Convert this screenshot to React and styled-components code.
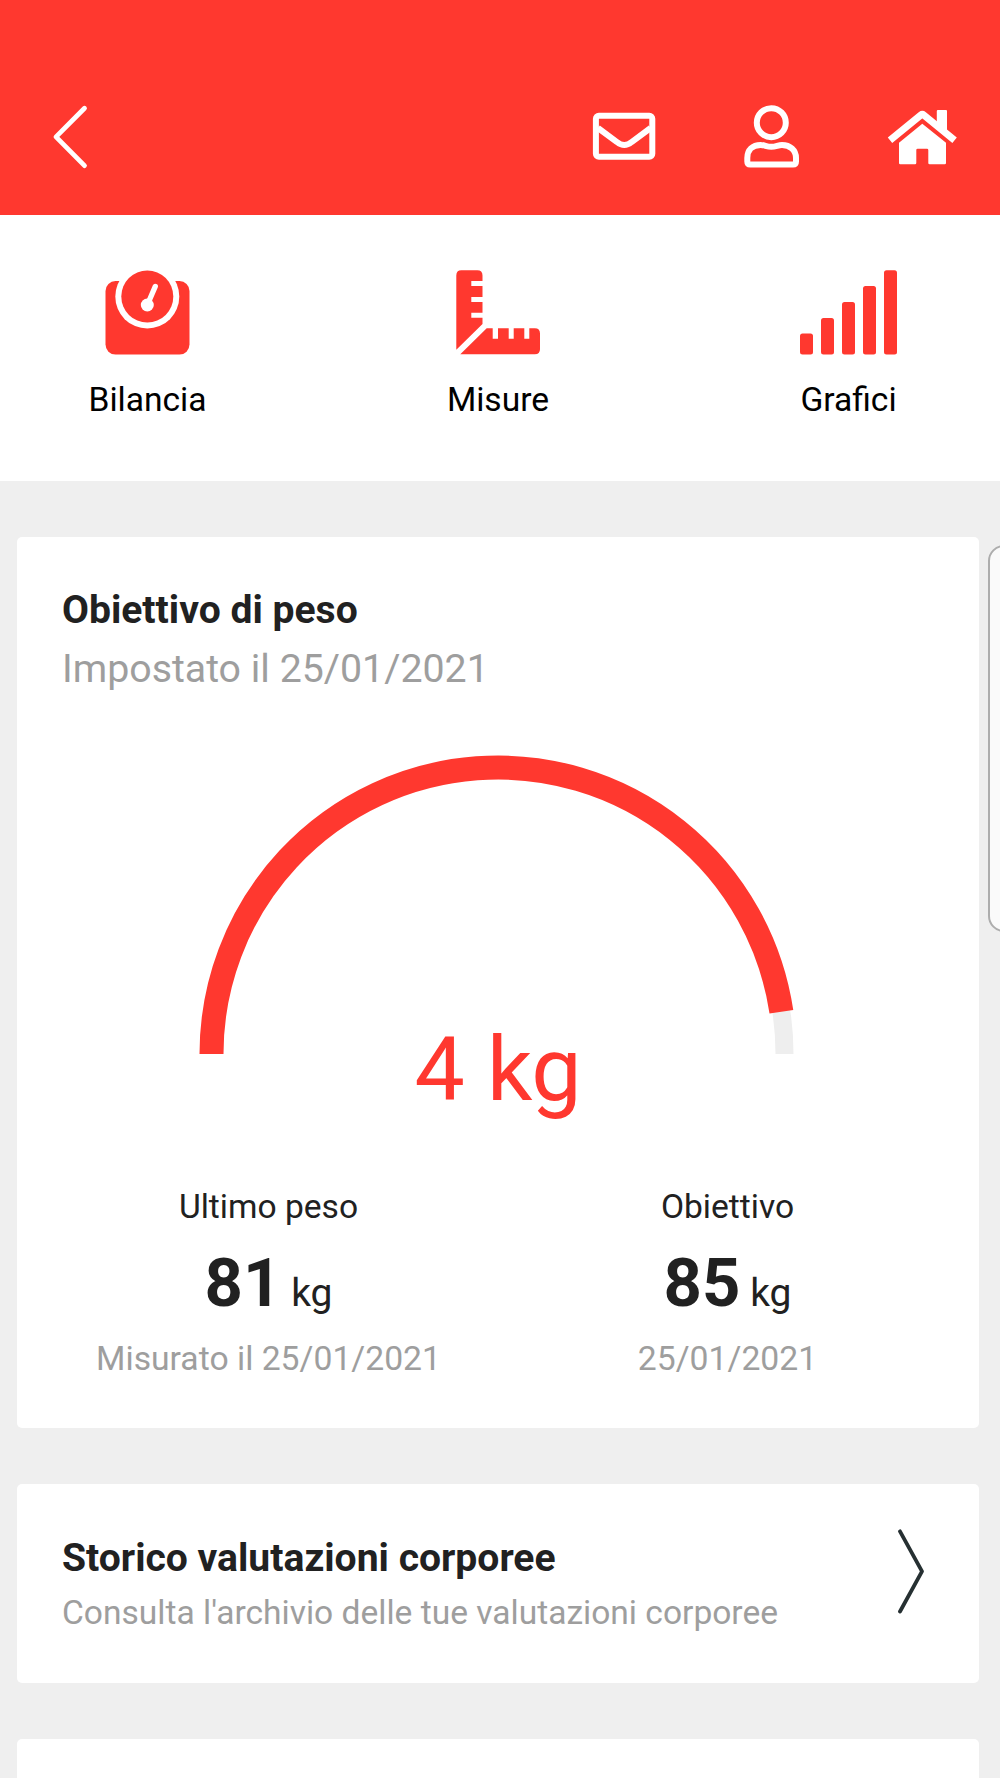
import React from 'react';
import styled, { createGlobalStyle } from 'styled-components';

const RED = '#ff382f';

const GlobalStyle = createGlobalStyle`
  * {
    box-sizing: border-box;
  }
  body {
    margin: 0;
    background: #efefef;
    font-family: Roboto, 'Liberation Sans', sans-serif;
    color: #212121;
  }
`;

const Screen = styled.div`
  position: relative;
  width: 1000px;
  height: 1778px;
  overflow: hidden;
  background: #efefef;
`;

const Header = styled.header`
  display: flex;
  justify-content: space-between;
  align-items: flex-start;
  height: 215px;
  padding: 104px 42px 0 52px;
  background: ${RED};
`;

const HeaderActions = styled.div`
  display: flex;
  align-items: center;
  gap: 87px;
  height: 65px;
`;

const IconButton = styled.button`
  display: block;
  padding: 0;
  border: 0;
  background: none;
  color: #fff;

  svg {
    display: block;
  }
`;

const Tabs = styled.nav`
  display: flex;
  justify-content: space-between;
  height: 266px;
  padding: 55px 94px 0 90px;
  background: #fff;
`;

const Tab = styled.div`
  display: flex;
  flex-direction: column;
  align-items: center;
  width: 115px;
  color: ${RED};
`;

const TabLabel = styled.span`
  margin-top: 25px;
  font-size: 33.6px;
  line-height: 40px;
  white-space: nowrap;
  color: #000;
`;

const Content = styled.main`
  display: flex;
  flex-direction: column;
  gap: 56px;
  padding: 56px 21px 0 17px;
`;

const Card = styled.section`
  height: ${props => props.$height}px;
  border-radius: 5px;
  background: #fff;
`;

const GoalCard = styled(Card)`
  padding: 49px 22px 0;
`;

const CardHead = styled.div`
  padding-left: 23px;
`;

const CardTitle = styled.h2`
  margin: 0;
  font-size: 39.1px;
  font-weight: 700;
  line-height: 48px;
  white-space: nowrap;
`;

const CardSubtitle = styled.p`
  margin: ${props => (props.$small ? '11px 0 0' : '5px 0 0')};
  font-size: ${props => (props.$small ? 33.55 : 39.3)}px;
  line-height: ${props => (props.$small ? 40 : 60)}px;
  white-space: nowrap;
  color: #9e9e9e;
`;

const Gauge = styled.div`
  display: flex;
  flex-direction: column;
  align-items: center;
  margin-top: 56px;
`;

const GaugeValue = styled.div`
  margin-top: -29px;
  font-size: 89.5px;
  line-height: 90px;
  color: ${RED};
`;

const Stats = styled.div`
  display: grid;
  grid-template-columns: 1fr 1fr;
  margin-top: 72px;
  text-align: center;
`;

const StatLabel = styled.div`
  font-size: 33.6px;
  line-height: 40px;
`;

const StatValue = styled.div`
  margin-top: 16px;
  height: 80px;
  font-size: 39px;
  line-height: 80px;

  strong {
    font-size: 67px;
    font-weight: 700;
  }
`;

const StatDate = styled.div`
  margin-top: 16px;
  font-size: 33.7px;
  line-height: 40px;
  color: #9e9e9e;
`;

const LinkCard = styled(Card)`
  display: flex;
  justify-content: space-between;
  align-items: flex-start;
  padding: 44px 54px 0 45px;
`;

const LinkText = styled.div`
  padding-top: 6px;
`;

// system edge panel handle, lies over the right side of the page
const EdgeHandle = styled.div`
  position: absolute;
  top: 545px;
  right: -20px;
  width: 32px;
  height: 387px;
  border: 2px solid #adadad;
  border-radius: 18px;
  background: #fafafa;
`;

const BackIcon = () => (
  <svg width="36" height="65" viewBox="0 0 36 65" fill="none">
    <path
      d="M32.5 4.3L4 32.9l28.5 28.7"
      stroke="currentColor"
      strokeWidth="4.8"
      strokeLinecap="round"
      strokeLinejoin="round"
    />
  </svg>
);

const MailIcon = () => (
  <svg width="64" height="49" viewBox="0 0 64 49" fill="none" stroke="currentColor" strokeWidth="6">
    <rect x="3.9" y="3.8" width="56.4" height="41" rx="3" />
    <path d="M6 16l19 14q7.3 6 14.6 0l19-14" />
  </svg>
);

const UserIcon = () => (
  <svg width="57" height="65" viewBox="0 0 57 65" fill="none" stroke="currentColor" strokeWidth="6">
    <circle cx="28.3" cy="18.7" r="14.5" />
    <path d="M7.3 60.5H50q3 0 3-3V54c0-8-6-13-14-13-4 0-6 1.8-10.7 1.8S21.6 41 17.6 41c-8 0-13.3 5-13.3 13v3.5q0 3 3 3z" />
  </svg>
);

const HomeIcon = () => (
  <svg width="71" height="56" viewBox="0 0 71 56" fill="currentColor">
    <path d="M50.8 1h8.2q1 0 1 1v22L49.8 15V2q0-1 1-1z" />
    <path
      d="M3 31.2L33.9 6q1.4-1.1 2.8 0l30.9 25.2"
      fill="none"
      stroke="currentColor"
      strokeWidth="7"
      strokeLinejoin="round"
    />
    <path d="M35.3 14.7L59 33.8V54q0 1.3-1.3 1.3H42.6q-1.3 0-1.3-1.3V41q0-1.3-1.3-1.3h-9.4q-1.3 0-1.3 1.3v13q0 1.3-1.3 1.3H13.3Q12 55.3 12 54V33.8z" />
  </svg>
);

const ScaleIcon = () => (
  <svg width="85" height="85" viewBox="0 0 85 85">
    <rect x=".5" y="11" width="84" height="73.6" rx="10" fill="currentColor" />
    <circle cx="42.3" cy="26.5" r="32" fill="#fff" />
    <circle cx="42.3" cy="26.5" r="26" fill="currentColor" />
    <circle cx="42.3" cy="35" r="6.5" fill="#fff" />
    <path d="M42.3 35l8-18.6" stroke="#fff" strokeWidth="5.3" strokeLinecap="round" />
  </svg>
);

const RulerIcon = () => (
  <svg width="84" height="85" viewBox="0 0 84 85" fill="currentColor">
    <path d="M5.3.3h16q5.2 0 5.2 5.2V11H15.3v5h11.2v11H15.3v5h11.2v10.7H15.3v5h11.2V54L.3 79.7V5.5Q.3.3 5.3.3z" />
    <path d="M30.7 58.3h6v10.4H42V58.3h10.7v10.4h5V58.3h10.6v10.4h5V58.3h5.5q5.2 0 5.2 5.2v15.8q0 5-5.2 5H4.3z" />
  </svg>
);

const bars = [21, 36.7, 52.7, 68.5, 84.3];

const ChartIcon = () => (
  <svg width="97" height="85" viewBox="0 0 97 85" fill="currentColor">
    {bars.map((h, i) => (
      <rect key={h} x={i * 21} y={84.6 - h} width="13" height={h} rx="2.5" />
    ))}
  </svg>
);

const GaugeArc = ({ progress }) => {
  const r = 286.5;
  const angle = Math.PI * (1 - progress);
  const x = 299 + r * Math.cos(angle);
  const y = 299 - r * Math.sin(angle);

  return (
    <svg width="598" height="299" viewBox="0 0 598 299" fill="none">
      <path d={`M12.5 299A${r} ${r} 0 0 1 585.5 299`} stroke="#eeeeee" strokeWidth="18" />
      <path d={`M12.5 299A${r} ${r} 0 0 1 ${x} ${y}`} stroke={RED} strokeWidth="24" />
    </svg>
  );
};

const ArrowIcon = () => (
  <svg width="27" height="86" viewBox="0 0 27 86" fill="none">
    <path
      d="M2 3.3l22 40-22 40.2"
      stroke="#263032"
      strokeWidth="3.8"
      strokeLinecap="round"
      strokeLinejoin="round"
    />
  </svg>
);

const tabs = [
  { label: 'Bilancia', icon: <ScaleIcon /> },
  { label: 'Misure', icon: <RulerIcon /> },
  { label: 'Grafici', icon: <ChartIcon /> }
];

const stats = [
  { label: 'Ultimo peso', value: 81, date: 'Misurato il 25/01/2021' },
  { label: 'Obiettivo', value: 85, date: '25/01/2021' }
];

const App = () => {
  return (
    <>
      <GlobalStyle />
      <Screen>
        <Header>
          <IconButton>
            <BackIcon />
          </IconButton>
          <HeaderActions>
            <IconButton>
              <MailIcon />
            </IconButton>
            <IconButton>
              <UserIcon />
            </IconButton>
            <IconButton>
              <HomeIcon />
            </IconButton>
          </HeaderActions>
        </Header>

        <Tabs>
          {tabs.map(({ label, icon }) => (
            <Tab key={label}>
              {icon}
              <TabLabel>{label}</TabLabel>
            </Tab>
          ))}
        </Tabs>

        <Content>
          <GoalCard $height={891}>
            <CardHead>
              <CardTitle>Obiettivo di peso</CardTitle>
              <CardSubtitle>Impostato il 25/01/2021</CardSubtitle>
            </CardHead>
            <Gauge>
              <GaugeArc progress={0.953} />
              <GaugeValue>4 kg</GaugeValue>
            </Gauge>
            <Stats>
              {stats.map(({ label, value, date }) => (
                <div key={label}>
                  <StatLabel>{label}</StatLabel>
                  <StatValue>
                    <strong>{value}</strong> kg
                  </StatValue>
                  <StatDate>{date}</StatDate>
                </div>
              ))}
            </Stats>
          </GoalCard>

          <LinkCard $height={199}>
            <LinkText>
              <CardTitle>Storico valutazioni corporee</CardTitle>
              <CardSubtitle $small>Consulta l'archivio delle tue valutazioni corporee</CardSubtitle>
            </LinkText>
            <ArrowIcon />
          </LinkCard>

          <Card $height={199} />
        </Content>

        <EdgeHandle />
      </Screen>
    </>
  );
};

export default App;
